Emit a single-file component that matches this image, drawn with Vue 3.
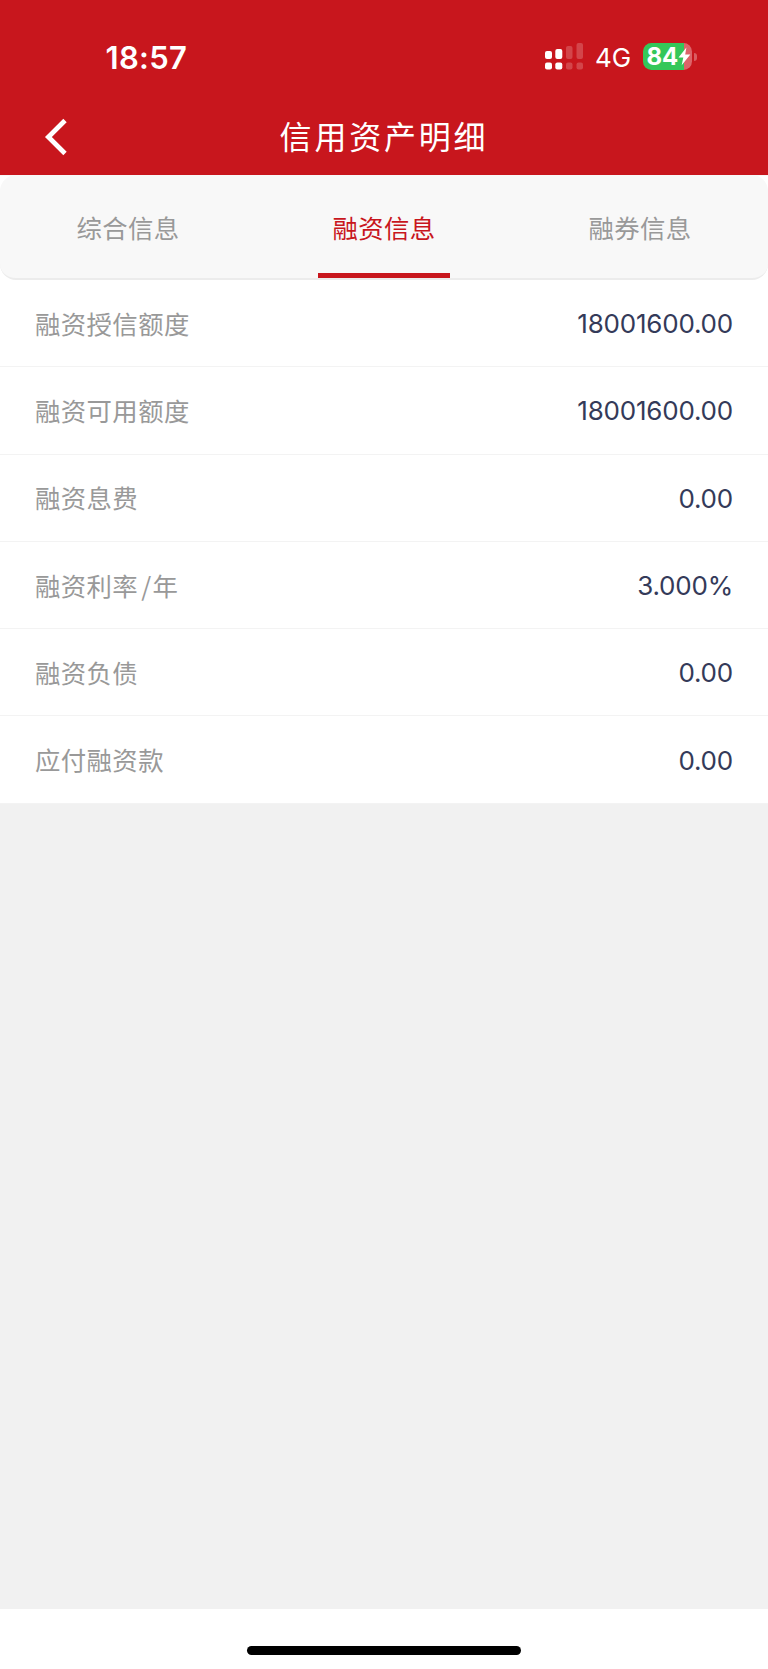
<script setup>
import {ref} from "vue";

const activeTab = ref(1)
const tabs = ['综合信息', '融资信息', '融券信息']

const rows = [
  {label: '融资授信额度', value: '18001600.00'},
  {label: '融资可用额度', value: '18001600.00'},
  {label: '融资息费', value: '0.00'},
  {label: '融资利率/年', value: '3.000%'},
  {label: '融资负债', value: '0.00'},
  {label: '应付融资款', value: '0.00'},
]

// the slash gets its own span so it can have some air around it
const splitLabel = (label) => label.split(/(\/)/)
</script>

<template>
  <main>
    <header>
      <div class="status">
        <span class="time">18:57</span>
        <div class="status-right">
          <svg class="signal" width="38" height="27" viewBox="0 0 38 27" fill="#fff">
            <rect x="0" y="8" width="7" height="8" rx="2"/>
            <rect x="10.3" y="6" width="7" height="10" rx="2"/>
            <g opacity=".2">
              <rect x="21" y="3" width="6.5" height="13" rx="2"/>
              <rect x="31.5" y="0" width="6.5" height="16" rx="2"/>
              <rect x="21" y="19.5" width="6.5" height="7" rx="2"/>
              <rect x="31.5" y="19.5" width="6.5" height="7" rx="2"/>
            </g>
            <rect x="0" y="19.5" width="7" height="7" rx="2"/>
            <rect x="10.3" y="19.5" width="7" height="7" rx="2"/>
          </svg>
          <span class="network">4G</span>
          <div class="battery">
            <span>84</span>
            <svg width="13" height="19" viewBox="0 0 13 19" fill="#fff">
              <path d="M8.4 0.5 L0.5 10.6 H5.3 L3.7 18.2 L12.3 7.6 H7.2 Z"/>
            </svg>
          </div>
          <i class="battery-cap"></i>
        </div>
      </div>
      <div class="nav">
        <svg class="back" width="24" height="38" viewBox="0 0 24 38" fill="none">
          <path d="M21 2.5 L4.4 19 L21 35.5" stroke="#fff" stroke-width="4.8"/>
        </svg>
        <h1>信用资产明细</h1>
      </div>
    </header>

    <nav class="tabs">
      <button v-for="(tab, i) in tabs" :key="tab" :class="{active: i === activeTab}" @click="activeTab = i">
        <span>{{tab}}</span>
      </button>
    </nav>

    <ul>
      <li v-for="row in rows" :key="row.label">
        <span class="label"><span v-for="part in splitLabel(row.label)" :key="part" :class="{slash: part === '/'}">{{part}}</span></span>
        <span class="value">{{row.value}}</span>
      </li>
    </ul>

    <footer>
      <div class="home-bar"></div>
    </footer>
  </main>
</template>

<style>
body{
  margin: 0;
  background-color: #fff;
}
</style>

<style scoped>
main{
  display: flex;
  flex-direction: column;
  height: 1669px;
  background-color: #f1f1f1;
  font-family: "Noto Sans CJK SC", sans-serif;
}

header{
  height: 175.4px;
  background-color: #c8161d;
  color: white;
}

.status{
  display: flex;
  justify-content: space-between;
  align-items: center;
  height: 113px;
  box-sizing: border-box;
  padding: 0 71px 0 105.5px;
  font-family: Inter, sans-serif;
}

.time{
  padding-top: 1px;
  font-size: 31px;
  font-weight: 600;
  letter-spacing: 0.3px;
}

.status-right{
  display: flex;
  align-items: center;
}

.network{
  margin-left: 12px;
  padding-top: 2px;
  width: 36px;
  font-size: 26px;
}

.battery{
  display: flex;
  align-items: center;
  width: 49px;
  height: 26.5px;
  margin-left: 12px;
  box-sizing: border-box;
  padding-left: 3.5px;
  border-radius: 8.5px;
  background: linear-gradient(90deg, #34c759 84%, #dc6469 84%);
  font-size: 24px;
  font-weight: 700;
}

.battery-cap{
  width: 3px;
  height: 8px;
  margin-left: 2px;
  border-radius: 0 4px 4px 0;
  background-color: #da5c61;
}

.nav{
  display: grid;
  grid-template-columns: 100px 1fr 100px;
  align-items: center;
  height: 48px;
}

.back{
  margin-left: 44px;
}

h1{
  margin: 0;
  padding-bottom: 4px;
  text-align: center;
  font-size: 32px;
  line-height: 44px;
  font-weight: 400;
  letter-spacing: 2.8px;
}

.tabs{
  display: flex;
  height: 104.6px;
  box-sizing: border-box;
  border-bottom: 2px solid #ececec;
  border-radius: 16px;
  background-color: #f8f8f8;
  box-shadow: 0 0 0 16px #fff;
  clip-path: inset(0);
}

.tabs button{
  flex: 1;
  display: flex;
  justify-content: center;
  padding: 0;
  border: none;
  background: none;
  font-family: inherit;
  font-size: 25.4px;
  font-weight: 400;
  letter-spacing: 0.4px;
  color: #999;
}

.tabs span{
  display: flex;
  align-items: center;
  justify-content: center;
  width: 132px;
  height: 100%;
  box-sizing: border-box;
  border-top: 5px solid transparent;
  border-bottom: 5px solid transparent;
}

.tabs .active{
  color: #c8161d;
}

.tabs .active span{
  border-bottom-color: #c8161d;
}

ul{
  margin: 0;
  padding: 0;
  list-style: none;
}

li{
  display: flex;
  justify-content: space-between;
  align-items: center;
  height: 87.3px;
  box-sizing: border-box;
  padding: 0 35px;
  border-bottom: 1px solid #f3f3f3;
  background-color: white;
}

.label{
  padding-bottom: 1px;
  font-size: 25.4px;
  letter-spacing: 0.4px;
  color: #999;
}

.slash{
  margin: 0 1px 0 3px;
}

.value{
  padding-top: 1px;
  font-family: Inter, sans-serif;
  font-size: 26px;
  letter-spacing: -0.2px;
  color: #343a59;
}

footer{
  display: flex;
  justify-content: center;
  align-items: center;
  height: 60px;
  margin-top: auto;
  background-color: white;
}

.home-bar{
  width: 274px;
  height: 9px;
  margin-top: 22px;
  border-radius: 5px;
  background-color: black;
}
</style>
